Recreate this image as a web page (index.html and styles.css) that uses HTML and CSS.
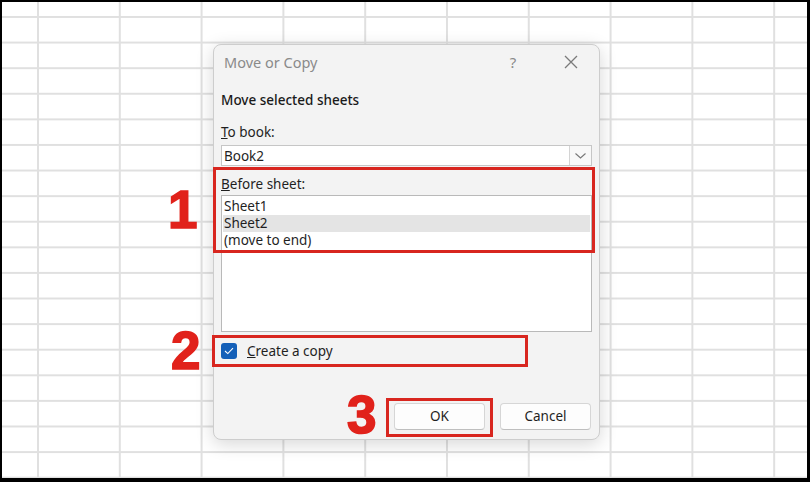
FILE: index.html
```html
<!DOCTYPE html>
<html lang="en">
<head>
    <meta charset="UTF-8">
    <meta name="viewport" content="width=device-width, initial-scale=1.0">
    <title>Move or Copy</title>
    <link rel="stylesheet" href="styles.css">
</head>
<body>
    <div class="screen">
        <div class="dialog">
            <div class="titlebar">
                <span class="title">Move or Copy</span>
                <span class="help">?</span>
                <span class="close">
                    <svg width="14" height="14" viewBox="0 0 14 14"><path d="M1 1L13 13M13 1L1 13" stroke="#7a7a7a" stroke-width="1.3" fill="none"/></svg>
                </span>
            </div>
            <p class="heading">Move selected sheets</p>
            <p class="label"><u>T</u>o book:</p>
            <div class="combo">
                <span class="combo-text">Book2</span>
                <span class="combo-btn">
                    <svg width="11" height="6" viewBox="0 0 11 6"><path d="M0.5 0.5L5.5 5L10.5 0.5" stroke="#777" stroke-width="1.1" fill="none"/></svg>
                </span>
            </div>
            <p class="label before"><u>B</u>efore sheet:</p>
            <div class="listbox">
                <div class="item">Sheet1</div>
                <div class="item selected">Sheet2</div>
                <div class="item">(move to end)</div>
            </div>
            <div class="check-row">
                <span class="checkbox">
                    <svg width="10" height="8" viewBox="0 0 10 8"><path d="M1 4L3.8 6.6L9 1.2" stroke="#fff" stroke-width="1.1" fill="none"/></svg>
                </span>
                <span class="check-label"><u>C</u>reate a copy</span>
            </div>
            <div class="buttons">
                <a class="btn">OK</a>
                <a class="btn">Cancel</a>
            </div>
        </div>

        <!-- annotations drawn over the screenshot -->
        <div class="mark mark-1"></div>
        <div class="mark mark-2"></div>
        <div class="mark mark-3"></div>
        <span class="num num-1">1</span>
        <span class="num num-2">2</span>
        <span class="num num-3">3</span>
    </div>
</body>
</html>
```

FILE: styles.css
```css
body {
    margin: 0;
    font-family: "Noto Sans", "Open Sans", sans-serif;
    color: #1f1f1f;
}
.screen {
    position: relative;
    width: 810px;
    height: 482px;
    box-sizing: border-box;
    border: 2px solid #000;
    border-right-width: 3px;
    border-bottom-width: 4px;
    padding: 42px 0 0 211px;
    background-color: #fff;
    background-image:
        linear-gradient(90deg, #e0e0e0 2px, transparent 2px),
        linear-gradient(180deg, #e0e0e0 2px, transparent 2px);
    background-size: 81.8px 25.6px;
    background-position: 35px 14px;
    overflow: hidden;
}
.dialog {
    width: 387px;
    height: 396px;
    box-sizing: border-box;
    border: 1px solid #cdcdcd;
    border-radius: 8px;
    background: #f3f3f3;
    box-shadow: 0 4px 18px rgba(0,0,0,0.16);
    padding: 0 7px 9px 7px;
    display: flex;
    flex-direction: column;
}
.titlebar {
    height: 34px;
    display: flex;
    align-items: center;
}
.title {
    flex: 1;
    margin-left: 3px;
    font-size: 14.5px;
    color: #8a8a8a;
}
.help {
    width: 20px;
    text-align: center;
    font-size: 15px;
    color: #8a8a8a;
}
.close {
    width: 20px;
    height: 14px;
    margin-left: 38px;
    margin-right: 11px;
    display: flex;
    justify-content: center;
}
p {
    margin: 0;
}
.heading {
    margin-top: 12px;
    line-height: 18px;
    font-size: 13.5px;
    font-weight: 500;
    color: #1a1a1a;
}
.label {
    margin-top: 14px;
    line-height: 18px;
    font-size: 13.5px;
}
.label.before {
    margin-top: 9px;
}
.combo {
    margin-top: 4px;
    height: 21px;
    box-sizing: border-box;
    border: 1px solid #c6c6c6;
    background: #fff;
    display: flex;
    align-items: center;
}
.combo-text {
    flex: 1;
    padding-left: 2px;
    font-size: 13.5px;
}
.combo-btn {
    width: 22px;
    height: 19px;
    box-sizing: border-box;
    border-left: 1px solid #d4d4d4;
    background: #f8f8f8;
    display: flex;
    align-items: center;
    justify-content: center;
}
.listbox {
    margin-top: 2px;
    height: 137px;
    box-sizing: border-box;
    border: 1px solid #b9b9b9;
    background: #fff;
    padding: 2px 1px;
}
.item {
    height: 17px;
    line-height: 17px;
    padding-left: 1px;
    font-size: 13.5px;
}
.item.selected {
    background: #e4e4e4;
}
.check-row {
    margin-top: 10px;
    height: 18px;
    display: flex;
    align-items: center;
}
.checkbox {
    width: 16px;
    height: 16px;
    border-radius: 3px;
    background: #1560b8;
    display: flex;
    align-items: center;
    justify-content: center;
}
.check-label {
    margin-left: 10px;
    font-size: 13.5px;
}
.buttons {
    margin-top: auto;
    display: flex;
    justify-content: flex-end;
    gap: 15px;
    padding-right: 1px;
}
.btn {
    width: 91px;
    height: 27px;
    box-sizing: border-box;
    border: 1px solid #d6d6d6;
    border-bottom-color: #bfbfbf;
    border-radius: 4px;
    background: #fdfdfd;
    font-size: 13.5px;
    line-height: 25px;
    text-align: center;
}
.mark {
    position: absolute;
    box-sizing: border-box;
    border: 3px solid #d8261f;
}
.mark-1 {
    left: 211px;
    top: 165px;
    width: 382px;
    height: 86px;
}
.mark-2 {
    left: 210px;
    top: 333px;
    width: 316px;
    height: 32px;
}
.mark-3 {
    left: 384px;
    top: 396px;
    width: 107px;
    height: 39px;
}
.num {
    position: absolute;
    font-family: "Liberation Sans", Arial, sans-serif;
    font-weight: bold;
    font-size: 53px;
    line-height: 53px;
    color: #e1221b;
    -webkit-text-stroke: 1.6px #e1221b;
}
.num-1 {
    left: 166px;
    top: 181px;
}
.num-2 {
    left: 169px;
    top: 322px;
}
.num-3 {
    left: 345px;
    top: 386px;
}
```
